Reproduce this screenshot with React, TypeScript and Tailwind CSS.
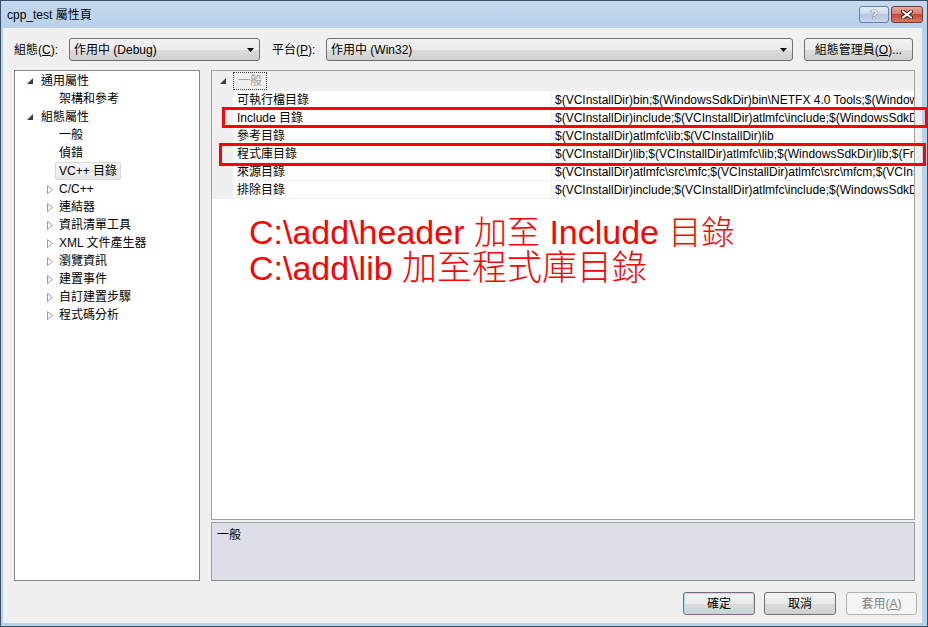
const font = "font-['Liberation_Sans','Noto_Sans_CJK_TC',sans-serif]";

const treeItems = [
  { label: "通用屬性", level: 0, expanded: true },
  { label: "架構和參考", level: 1 },
  { label: "組態屬性", level: 0, expanded: true },
  { label: "一般", level: 1 },
  { label: "偵錯", level: 1 },
  { label: "VC++ 目錄", level: 1, selected: true },
  { label: "C/C++", level: 1, collapsed: true },
  { label: "連結器", level: 1, collapsed: true },
  { label: "資訊清單工具", level: 1, collapsed: true },
  { label: "XML 文件產生器", level: 1, collapsed: true },
  { label: "瀏覽資訊", level: 1, collapsed: true },
  { label: "建置事件", level: 1, collapsed: true },
  { label: "自訂建置步驟", level: 1, collapsed: true },
  { label: "程式碼分析", level: 1, collapsed: true },
];

const rows = [
  ["可執行檔目錄", "$(VCInstallDir)bin;$(WindowsSdkDir)bin\\NETFX 4.0 Tools;$(WindowsSdkDir)bin;$(VSInstallDir)Common7\\Tools\\bin"],
  ["Include 目錄", "$(VCInstallDir)include;$(VCInstallDir)atlmfc\\include;$(WindowsSdkDir)include;$(FrameworkSDKDir)\\include"],
  ["參考目錄", "$(VCInstallDir)atlmfc\\lib;$(VCInstallDir)lib"],
  ["程式庫目錄", "$(VCInstallDir)lib;$(VCInstallDir)atlmfc\\lib;$(WindowsSdkDir)lib;$(FrameworkSDKDir)\\lib"],
  ["來源目錄", "$(VCInstallDir)atlmfc\\src\\mfc;$(VCInstallDir)atlmfc\\src\\mfcm;$(VCInstallDir)atlmfc\\src\\atl;$(VCInstallDir)crt\\src"],
  ["排除目錄", "$(VCInstallDir)include;$(VCInstallDir)atlmfc\\include;$(WindowsSdkDir)include;$(FrameworkSDKDir)\\include"],
];

const Expanded = () => (
  <svg width="6" height="6" viewBox="0 0 6 6">
    <polygon points="6,0 6,6 0,6" fill="#3c3c3c" />
  </svg>
);

const Collapsed = () => (
  <svg width="6" height="9" viewBox="0 0 6 9">
    <polygon points="0.5,0.5 5.5,4.5 0.5,8.5" fill="#fff" stroke="#9a9a9a" />
  </svg>
);

const Arrow = () => (
  <svg width="7" height="4" viewBox="0 0 7 4">
    <polygon points="0,0 7,0 3.5,4" fill="#000" />
  </svg>
);

const face =
  "h-[23px] flex items-center rounded-[3px] border border-[#707070] bg-[linear-gradient(#f2f2f2_0%,#ebebeb_50%,#dddddd_50%,#cfcfcf_100%)] text-[12px] text-black";

const Combo = ({ text, w }: { text: string; w: string }) => (
  <div className={`${face} ${w} justify-between pl-[4px] pr-[5px]`}>
    <span>{text}</span>
    <Arrow />
  </div>
);

export default function App() {
  return (
    <div className={`relative w-[928px] h-[627px] overflow-hidden flex flex-col border border-[#3d4f63] bg-[#b9d1ea] ${font}`}>
      {/* title bar */}
      <div className="h-[27px] flex items-start justify-between bg-[linear-gradient(#c4d8ef,#b9d1ea)]">
        <span className="mt-[5px] ml-[6px] text-[12px] text-black">cpp_test 屬性頁</span>
        <div className="flex mt-[5px] mr-[4px] gap-[2px]">
          <div className="w-[30px] h-[17px] rounded-[3px] border border-[#6b819c] bg-[linear-gradient(#e3ecf7,#c8d8ec_50%,#b5c9e2_50%,#c6d7ec)] flex items-center justify-center text-[12px] font-bold text-white leading-none [text-shadow:0_0_1px_#2f3f55,0_0_1px_#2f3f55]">
            ?
          </div>
          <div className="w-[32px] h-[17px] rounded-[3px] border border-[#6e3a3a] bg-[linear-gradient(#e9a99b,#d47766_50%,#c24a36_50%,#d97a63)] flex items-center justify-center">
            <svg width="12" height="9" viewBox="0 0 12 9">
              <path d="M2 1.5 L10 7.5 M10 1.5 L2 7.5" stroke="#3b1a1a" strokeWidth="4" strokeLinecap="square" />
              <path d="M2 1.5 L10 7.5 M10 1.5 L2 7.5" stroke="#fff" strokeWidth="2" strokeLinecap="square" />
            </svg>
          </div>
        </div>
      </div>

      {/* client */}
      <div className="flex-1 ml-[2px] mr-[5px] mb-[3px] bg-[#f0f0f0] flex flex-col pl-[11px]">
        <div className="mt-[10px] flex items-center text-[12px] text-black">
          <span className="w-[55px]">
            組態(<span className="underline">C</span>):
          </span>
          <Combo text="作用中 (Debug)" w="w-[191px]" />
          <span className="ml-[12px] w-[54px]">
            平台(<span className="underline">P</span>):
          </span>
          <Combo text="作用中 (Win32)" w="w-[467px]" />
          <div className={`${face} justify-center ml-[11px] w-[109px]`}>
            組態管理員(<span className="underline">O</span>)...
          </div>
        </div>

        <div className="mt-[9px] flex h-[511px]">
          {/* tree */}
          <div className="w-[186px] h-full border border-[#828790] bg-white pt-[1px] text-[12px] text-black">
            {treeItems.map((it) => (
              <div
                key={it.label}
                className={`h-[18px] flex items-center ${
                  it.level === 0 ? "pl-[12px]" : it.collapsed ? "pl-[32px]" : "pl-[40px]"
                }`}
              >
                {it.expanded && (
                  <span className="w-[10px] flex items-center">
                    <Expanded />
                  </span>
                )}
                {it.collapsed && (
                  <span className="w-[8px] flex items-center">
                    <Collapsed />
                  </span>
                )}
                <span
                  className={`h-[18px] flex items-center px-[3px] border rounded-[2px] ${
                    it.selected
                      ? "border-[#d9d9d9] bg-[linear-gradient(#f8f8f8,#e5e5e5)]"
                      : "border-transparent"
                  }`}
                >
                  {it.label}
                </span>
              </div>
            ))}
          </div>

          {/* property grid */}
          <div className="ml-[11px] w-[704px] h-full flex flex-col">
            <div className="h-[450px] border border-[#a0a0a0] bg-white text-[12px] text-black overflow-hidden">
              <div className="h-[20px] flex items-center bg-[#f0f0f0]">
                <span className="w-[21px] pl-[8px] flex items-center">
                  <Expanded />
                </span>
                <span className="h-[18px] px-[4px] flex items-center border border-dotted border-[#404040] text-[#a0a0a0]">
                  一般
                </span>
              </div>
              {rows.map(([name, value]) => (
                <div key={name} className="h-[18px] flex">
                  <div className="w-[21px] bg-[#f0f0f0]" />
                  <div className="w-[319px] pl-[4px] flex items-center border-b border-r border-[#f0f0f0] whitespace-nowrap">
                    {name}
                  </div>
                  <div className="flex-1 pl-[3px] flex items-center border-b border-[#f0f0f0] whitespace-nowrap overflow-hidden">
                    {value}
                  </div>
                </div>
              ))}
            </div>
            <div className="mt-[2px] flex-1 border border-[#a0a0a0] border-b-[#8a8a8a] bg-[#dcdfe7] px-[5px] pt-[3px] text-[12px] text-black">
              一般
            </div>
          </div>
        </div>

        <div className="mt-[11px] flex justify-end pr-[5px] text-[12px]">
          <div className={`${face} justify-center w-[72px] border-[#3c7fb1] shadow-[inset_0_0_0_1px_#aee0f8]`}>確定</div>
          <div className={`${face} justify-center w-[72px] ml-[9px]`}>取消</div>
          <div className="ml-[10px] w-[71px] h-[23px] flex items-center justify-center rounded-[3px] border border-[#adb2b5] bg-[#f4f4f4] text-[#838383]">
            套用(<span className="underline">A</span>)
          </div>
        </div>
      </div>

      {/* annotations */}
      <div className="absolute left-[221px] top-[106px] w-[706px] h-[21px] border-[3px] border-[#ff0000]" />
      <div className="absolute left-[218px] top-[142px] w-[707px] h-[23px] border-[3px] border-[#ff0000]" />
      <div className="absolute left-[248px] top-[214px] text-[34px] leading-[35px] text-[#ff0000] font-['Liberation_Sans','Noto_Sans_CJK_TC',sans-serif] font-light whitespace-nowrap">
        <div>
          C:\add\header <span className="text-[33px]">加至</span> Include <span className="text-[33px]">目錄</span>
        </div>
        <div>
          C:\add\lib <span className="text-[35px]">加至程式庫目錄</span>
        </div>
      </div>
    </div>
  );
}
